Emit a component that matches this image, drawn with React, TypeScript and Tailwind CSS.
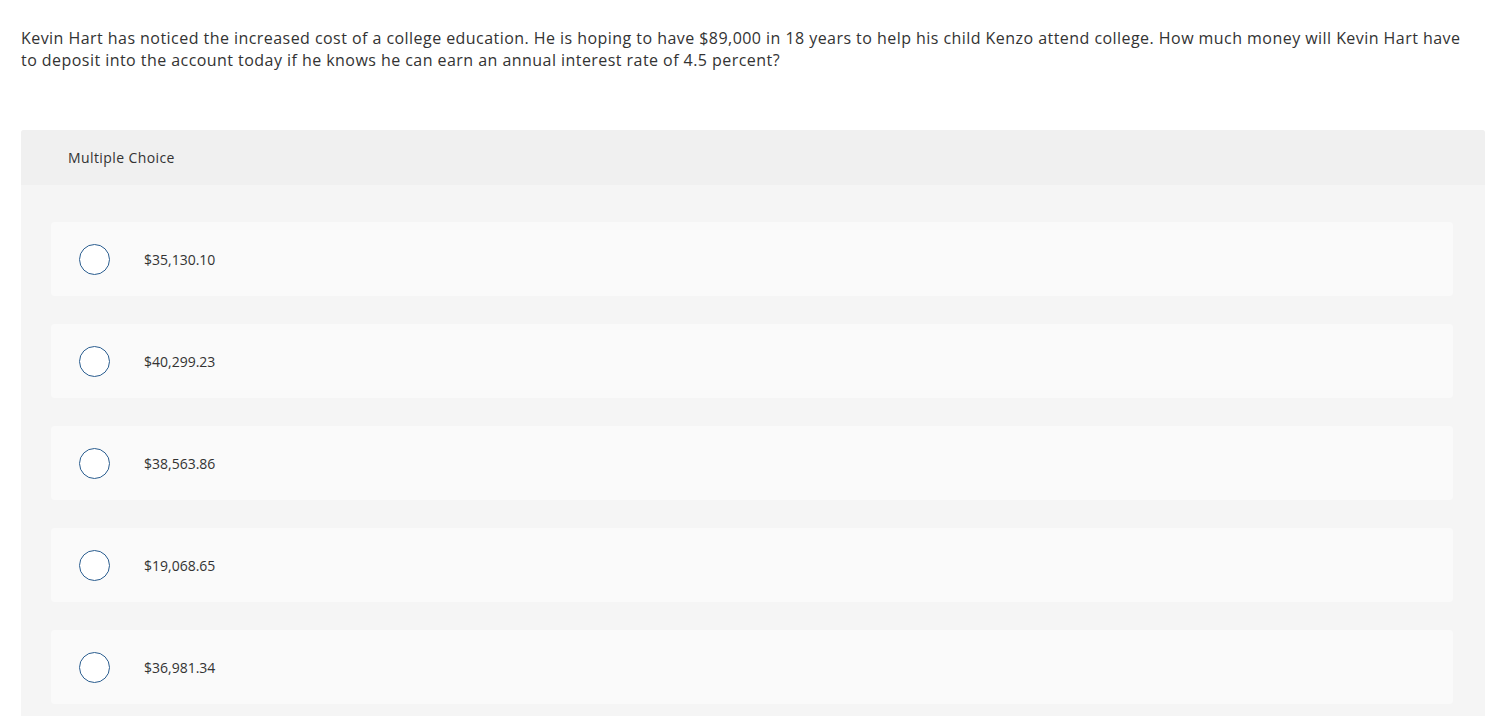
import React from "react";

const choices = ["$35,130.10", "$40,299.23", "$38,563.86", "$19,068.65", "$36,981.34"];

export default function App() {
  return (
    <div className="min-h-[720px] bg-white font-['Open_Sans',sans-serif] text-[#333]">
      <div className="px-[21px] pt-[27px]">
        <p className="text-[16px] leading-[22px] tracking-[0.45px]">
          Kevin Hart has noticed the increased cost of a college education. He is hoping to have $89,000 in 18 years to
          help his child Kenzo attend college. How much money will Kevin Hart have
          <br />
          to deposit into the account today if he knows he can earn an annual interest rate of 4.5 percent?
        </p>
      </div>
      <div className="mx-[21px] mt-[59px] rounded-t-[3px] bg-[#f5f5f5]">
        <div className="flex h-[55px] items-center rounded-t-[3px] bg-[#f0f0f0] pl-[47px] text-[14px] tracking-[0.4px]">
          Multiple Choice
        </div>
        <div className="flex flex-col gap-[28px] pl-[30px] pr-[32px] pt-[37px] pb-[12px]">
          {choices.map((c) => (
            <label
              key={c}
              className="flex h-[74px] items-center rounded-[4px] bg-[#fafafa] pl-[28px]"
            >
              <span className="h-[31px] w-[31px] shrink-0 rounded-full border border-[#2a5d8f] bg-white" />
              <span className="ml-[34px] text-[14px]">{c}</span>
            </label>
          ))}
        </div>
      </div>
    </div>
  );
}
